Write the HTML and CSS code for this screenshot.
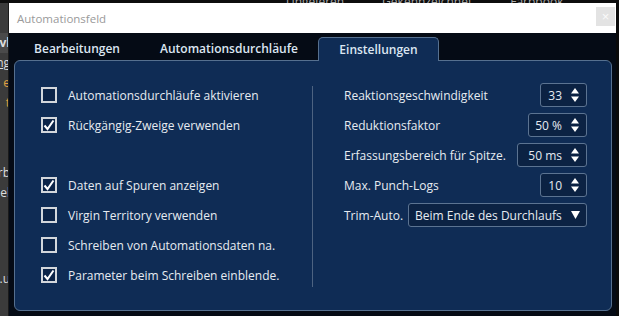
FILE: index.html
```html
<!DOCTYPE html>
<html>
  <head>
    <link rel="stylesheet" href="styles.css">
  </head>
  <body>
    <div id="backdrop">
      <div class="top-strip">
        <span>Ungeleren</span>
        <span>Gekennzeichnet</span>
        <span>Farbbook</span>
      </div>
      <div class="side-strip">
        <span class="side-line hi">vl</span>
        <span class="side-line ul">ng</span>
        <span class="side-line orange">e</span>
        <span class="side-line orange">t</span>
        <span class="side-line gap">rb</span>
        <span class="side-line">el</span>
        <span class="side-line last">.u</span>
      </div>
      <div id="dialog">
        <div class="titlebar">
          <span class="title">Automationsfeld</span>
          <button class="close">&times;</button>
        </div>
        <div class="dialog-body">
          <div class="tabs">
            <div class="tab t1">Bearbeitungen</div>
            <div class="tab t2">Automationsdurchläufe</div>
            <div class="tab active">Einstellungen</div>
          </div>
          <div class="panel">
            <div class="col-left">
              <label class="check-row"><span class="box"></span>Automationsdurchläufe aktivieren</label>
              <label class="check-row"><span class="box checked"></span>Rückgängig-Zweige verwenden</label>
              <div class="check-row"></div>
              <label class="check-row"><span class="box checked"></span>Daten auf Spuren anzeigen</label>
              <label class="check-row"><span class="box"></span>Virgin Territory verwenden</label>
              <label class="check-row"><span class="box"></span>Schreiben von Automationsdaten na.</label>
              <label class="check-row"><span class="box checked"></span>Parameter beim Schreiben einblende.</label>
            </div>
            <div class="sep"></div>
            <div class="col-right">
              <div class="field">
                <span>Reaktionsgeschwindigkeit</span>
                <div class="spin w47"><span>33</span><i class="arrows"></i></div>
              </div>
              <div class="field">
                <span>Reduktionsfaktor</span>
                <div class="spin w59"><span>50 %</span><i class="arrows"></i></div>
              </div>
              <div class="field">
                <span>Erfassungsbereich für Spitze.</span>
                <div class="spin w70"><span>50 ms</span><i class="arrows"></i></div>
              </div>
              <div class="field">
                <span>Max. Punch-Logs</span>
                <div class="spin w47"><span>10</span><i class="arrows"></i></div>
              </div>
              <div class="field">
                <span>Trim-Auto.</span>
                <div class="select"><span>Beim Ende des Durchlaufs</span><i class="caret"></i></div>
              </div>
            </div>
          </div>
        </div>
      </div>
    </div>
    <script>
      // draw the check marks and spinner arrows
      const CHECK = '<svg width="12" height="12" viewBox="0 0 12 12"><path d="M1.5 6.5 L4.5 10 L10.5 1.5" fill="none" stroke="#fff" stroke-width="2"/></svg>';
      const ARROWS = '<svg width="8" height="16" viewBox="0 0 8 16"><path d="M0 6.5 L4 1 L8 6.5 Z M0 9.5 L4 15 L8 9.5 Z" fill="#fff"/></svg>';
      const CARET = '<svg width="9" height="8" viewBox="0 0 9 8"><path d="M0 0 L9 0 L4.5 8 Z" fill="#fff"/></svg>';
      document.querySelectorAll('.box.checked').forEach(el => { el.innerHTML = CHECK; });
      document.querySelectorAll('.arrows').forEach(el => { el.innerHTML = ARROWS; });
      document.querySelectorAll('.caret').forEach(el => { el.innerHTML = CARET; });
    </script>
  </body>
</html>
```

FILE: styles.css
```css
* {
  box-sizing: border-box;
}

body {
  margin: 0;
  width: 619px;
  height: 316px;
  overflow: hidden;
  background: #262626;
  font-family: "Open Sans", "Noto Sans", sans-serif;
  font-size: 12px;
}

#backdrop {
  display: grid;
  grid-template-columns: 9px 607px 3px;
  grid-template-rows: 3px 313px;
  height: 316px;
  background: #0a0a0a;
}

.top-strip {
  grid-column: 1 / 4;
  grid-row: 1;
  overflow: hidden;
  background: #0d0d0d;
  color: #aaa;
  font-size: 12px;
  line-height: 4px;
  padding-left: 286px;
  display: flex;
  gap: 38px;
  white-space: nowrap;
}

.side-strip {
  grid-column: 1;
  grid-row: 2;
  background: #3b3b3b;
  border-right: 1px solid #1a1a1a;
  overflow: hidden;
  display: flex;
  flex-direction: column;
  align-items: flex-end;
  color: #ddd;
  font-size: 12px;
  padding-top: 30px;
}

.side-line {
  line-height: 20px;
  margin-right: -2px;
}

.side-line.hi {
  background: #4a4a4a;
  font-weight: bold;
}

.side-line.ul {
  text-decoration: underline;
}

.side-line.orange {
  color: #e0a040;
}

.side-line.gap {
  margin-top: 50px;
}

.side-line.last {
  margin-top: 66px;
}

#dialog {
  grid-column: 2;
  grid-row: 2;
  display: flex;
  flex-direction: column;
  background: #050b15;
}

.titlebar {
  height: 30px;
  background: #fff;
  display: flex;
  align-items: center;
  justify-content: space-between;
  padding-left: 8px;
}

.title {
  color: #9a9a9a;
  font-size: 11.5px;
}

.close {
  width: 19px;
  height: 19px;
  margin-right: 1px;
  margin-top: -4px;
  border: none;
  padding: 0;
  background: #e3e3e3;
  color: #fafafa;
  font-size: 13px;
  line-height: 19px;
}

.dialog-body {
  flex: 1;
  display: flex;
  flex-direction: column;
  padding: 4px 4px 5px 5px;
}

.tabs {
  display: flex;
  height: 23px;
}

.tab {
  flex-shrink: 0;
  text-align: center;
  color: #dce6f2;
  font-weight: 600;
  font-size: 12px;
  line-height: 23px;
  white-space: nowrap;
}

.t1 { width: 126px; }
.t2 { width: 178px; }

.tab.active {
  width: 121px;
  background: #0f2c55;
  border: 1px solid #56708f;
  border-bottom: none;
  border-radius: 5px 5px 0 0;
  position: relative;
  z-index: 1;
  margin-bottom: -1px;
  height: 24px;
}

.panel {
  flex: 1;
  display: flex;
  background: #0f2c55;
  border: 1px solid #56708f;
  border-radius: 6px;
  color: #e6ebf1;
}

.col-left {
  width: 297px;
  padding: 22px 0 0 26px;
  display: flex;
  flex-direction: column;
  gap: 6px;
}

.check-row {
  height: 24px;
  display: flex;
  align-items: center;
  gap: 11px;
  white-space: nowrap;
}

.box {
  width: 16px;
  height: 16px;
  border: 2px solid #d3d7dc;
  background: #0c2448;
  display: flex;
  align-items: center;
  justify-content: center;
}

.sep {
  width: 1px;
  margin: 25px 0 23px;
  background: #4d6381;
}

.col-right {
  flex: 1;
  padding: 22px 24px 0 31px;
  display: flex;
  flex-direction: column;
  gap: 6px;
}

.field {
  height: 24px;
  display: flex;
  align-items: center;
  justify-content: space-between;
  white-space: nowrap;
}

.spin,
.select {
  flex-shrink: 0;
  height: 24px;
  display: flex;
  align-items: center;
  justify-content: flex-end;
  gap: 9px;
  padding-right: 7px;
  background: #0b2243;
  border: 1px solid #5b7391;
  border-radius: 3px;
}

.w47 { width: 47px; }
.w59 { width: 59px; }
.w70 { width: 70px; }

.select {
  width: 179px;
  justify-content: space-between;
  padding-left: 6px;
}

.arrows,
.caret {
  display: flex;
}
```
